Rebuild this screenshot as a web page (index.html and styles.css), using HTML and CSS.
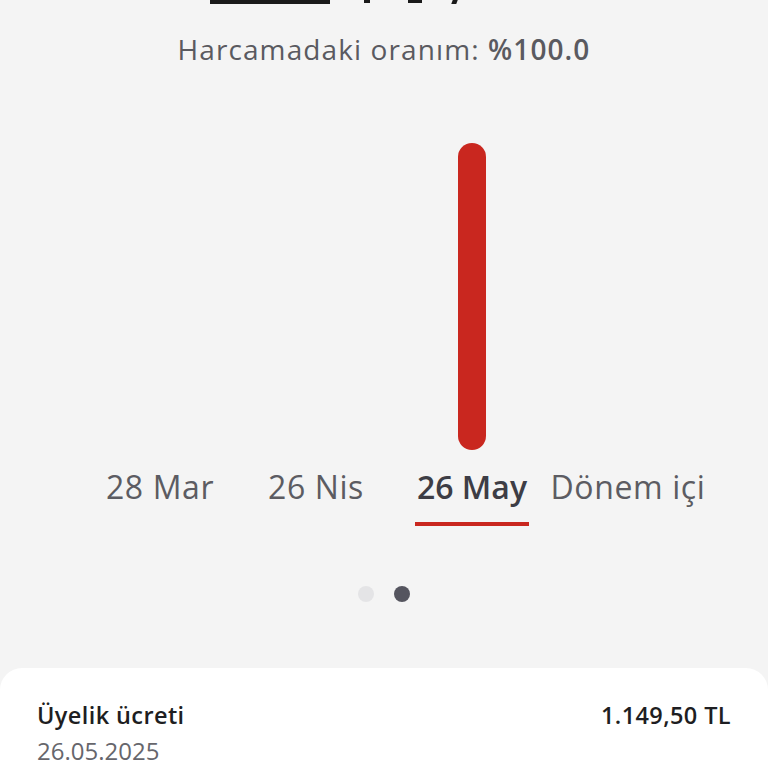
FILE: index.html
```html
<!DOCTYPE html>
<html>
<head>
    <title>Harcama Oranı</title>
    <link rel="stylesheet" href="styles.css">
</head>
<body>
    <div class="page">
        <!-- bottom edge of the heading that scrolled off the top -->
        <div class="top-cut">
            <span class="stroke s1"></span>
            <span class="stroke s2"></span>
            <span class="stroke s3"></span>
            <span class="stroke s4"></span>
        </div>
        <div class="ratio">Harcamadaki oranım: <b>%100.0</b></div>

        <div class="chart">
            <div class="col"><div class="bar-area"></div><div class="label">28 Mar</div><div class="mark"></div></div>
            <div class="col"><div class="bar-area"></div><div class="label">26 Nis</div><div class="mark"></div></div>
            <div class="col active"><div class="bar-area"><div class="bar" style="height: 307px"></div></div><div class="label">26 May</div><div class="mark"></div></div>
            <div class="col"><div class="bar-area"></div><div class="label">Dönem içi</div><div class="mark"></div></div>
        </div>

        <div class="dots">
            <span class="dot"></span>
            <span class="dot on"></span>
        </div>

        <div class="card">
            <div class="row">
                <div class="name">Üyelik ücreti</div>
                <div class="amount">1.149,50 TL</div>
            </div>
            <div class="date">26.05.2025</div>
        </div>
    </div>
</body>
</html>
```

FILE: styles.css
```css
body {
    margin: 0;
    background: #f4f4f4;
    font-family: "Open Sans", Arial, sans-serif;
    color: #58585e;
    overflow: hidden;
}
.page { width: 768px; height: 768px; overflow: hidden; }
.top-cut {
    height: 6px;
    display: flex;
    align-items: flex-start;
    padding-left: 210px;
}
.stroke { display: block; height: 4px; background: #1a1a1a; }
.s1 { width: 120px; }
.s2 { width: 6px; margin-left: 34px; height: 3px; }
.s3 { width: 14px; margin-left: 38px; height: 3px; }
.s4 { width: 5px; margin-left: 30px; height: 4px; transform: skewX(-20deg); }
.ratio {
    margin-top: 28px;
    text-align: center;
    font-size: 28px;
    letter-spacing: 1.1px;
    line-height: 30px;
    color: #5a5a60;
}
.ratio b { font-weight: 600; }
.chart {
    display: grid;
    grid-template-columns: repeat(4, 156px);
    justify-content: start;
    margin-left: 82px;
    margin-top: 79px;
}
.col { display: flex; flex-direction: column; align-items: center; }
.bar-area {
    height: 307px;
    display: flex;
    align-items: flex-end;
    justify-content: center;
}
.bar {
    width: 28px;
    background: #c9271f;
    border-radius: 14px;
}
.label {
    margin-top: 18px;
    font-size: 32px;
    letter-spacing: 0.6px;
    line-height: 38px;
    color: #5c5c62;
    white-space: nowrap;
}
.active .label { font-weight: 600; color: #3d3d45; letter-spacing: 0; }
.mark { width: 114px; height: 4px; margin-top: 16px; }
.active .mark { background: #c9271f; }
.dots {
    display: flex;
    justify-content: center;
    gap: 20px;
    margin-top: 60px;
}
.dot { width: 16px; height: 16px; border-radius: 50%; background: #e4e4e6; }
.dot.on { background: #55555f; }
.card {
    margin-top: 66px;
    background: #fff;
    border-radius: 22px 22px 0 0;
    padding: 32px 37px 20px 37px;
    height: 200px;
}
.row { display: flex; justify-content: space-between; align-items: center; }
.name, .amount { font-size: 23.5px; letter-spacing: 0.4px; font-weight: 600; color: #1e1e22; line-height: 30px; }
.date { font-size: 24px; color: #66666c; line-height: 30px; margin-top: 6px; }
```
